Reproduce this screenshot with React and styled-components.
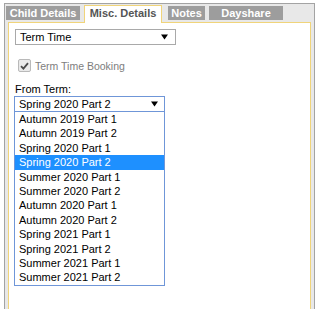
import React from "react";
import styled, { createGlobalStyle } from "styled-components";

const Global = createGlobalStyle`
  html, body { margin: 0; padding: 0; background: #fff; overflow: hidden; }
  body { font-family: "Liberation Sans", Arial, sans-serif; }
  * { box-sizing: border-box; }
`;

const Frame = styled.div`
  display: flex;
  flex-direction: column;
  margin: 3px 0 0 4px;
  width: 311px;
  height: 306px;
  border: 1px solid #a3a3a3;
  border-bottom: none;
  background: #e8e8e8;
  padding: 0 0 0 1px;
`;

const TabBar = styled.div`
  display: flex;
  align-items: flex-start;
  height: 18px;
  flex: none;
`;

const Tab = styled.div`
  position: relative;
  z-index: 1;
  width: ${(p) => p.$w}px;
  margin-right: ${(p) => p.$mr ?? 4}px;
  margin-top: ${(p) => (p.$active ? 1 : 2)}px;
  height: ${(p) => (p.$active ? 18 : 14)}px;
  background: ${(p) => (p.$active ? "#fff" : "#9d9d9d")};
  border: ${(p) => (p.$active ? "1px solid #f0d47a" : "none")};
  border-bottom: none;
  color: ${(p) => (p.$active ? "#555" : "#fff")};
  font-weight: bold;
  font-size: 11px;
  line-height: 14px;
  text-align: center;
  white-space: nowrap;
`;

const Panel = styled.div`
  flex: 1;
  margin-left: 2px;
  width: 303px;
  background: #fff;
  border: 1px solid #f0d47a;
  border-bottom: none;
  padding: 6px 0 0 5px;
`;

const Select = styled.div`
  position: relative;
  display: flex;
  align-items: center;
  justify-content: space-between;
  width: ${(p) => p.$w}px;
  height: 16px;
  margin-left: ${(p) => p.$ml ?? 0}px;
  border: 1px solid ${(p) => (p.$focus ? "#6f96d8" : "#a9a9a9")};
  background: #fff;
  padding: 0 ${(p) => p.$pr ?? 7}px 0 4px;
  font-size: 11px;
  color: #000;
  line-height: 14px;
`;

const Arrow = () => (
  <svg width="7" height="6" viewBox="0 0 7 6">
    <polygon points="0,0.5 7,0.5 3.5,5.5" fill="#000" />
  </svg>
);

const CheckRow = styled.label`
  display: flex;
  align-items: flex-end;
  gap: 4px;
  margin: 14px 0 0 4px;
  height: 13px;
`;

const Box = styled.span`
  width: 13px;
  height: 13px;
  border: 1px solid #b9b9b9;
  border-radius: 2px;
  background: #e9e9e9;
  display: flex;
  align-items: center;
  justify-content: center;
`;

const CheckLabel = styled.span`
  font-size: 10.5px;
  color: #7d7d7d;
  line-height: 12px;
`;

const FieldLabel = styled.div`
  margin: 11px 0 0 1px;
  font-size: 11px;
  line-height: 13px;
  height: 13px;
  color: #000;
`;

const Dropdown = styled.div`
  position: relative;
`;

const List = styled.ul`
  position: absolute;
  left: 0;
  top: 16px;
  width: 151px;
  margin: 0;
  padding: 0;
  list-style: none;
  border: 1px solid #6f96d8;
  border-top: none;
  background: #fff;
`;

const Item = styled.li`
  height: 14.4px;
  line-height: 14.4px;
  padding-left: 4px;
  font-size: 11px;
  white-space: nowrap;
  background: ${(p) => (p.$sel ? "#1e90ff" : "transparent")};
  color: ${(p) => (p.$sel ? "#fff" : "#000")};
`;

const terms = [
  "Autumn 2019 Part 1",
  "Autumn 2019 Part 2",
  "Spring 2020 Part 1",
  "Spring 2020 Part 2",
  "Summer 2020 Part 1",
  "Summer 2020 Part 2",
  "Autumn 2020 Part 1",
  "Autumn 2020 Part 2",
  "Spring 2021 Part 1",
  "Spring 2021 Part 2",
  "Summer 2021 Part 1",
  "Summer 2021 Part 2",
];

export default function App() {
  return (
    <>
      <Global />
      <Frame>
        <TabBar>
          <Tab $w={74}>Child Details</Tab>
          <Tab $w={78} $active $mr={6}>Misc. Details</Tab>
          <Tab $w={37} $mr={4}>Notes</Tab>
          <Tab $w={74}>Dayshare</Tab>
        </TabBar>
        <Panel>
          <Select $w={161} $ml={1}>
            <span>Term Time</span>
            <Arrow />
          </Select>
          <CheckRow>
            <Box>
              <svg width="9" height="8" viewBox="0 0 9 8">
                <path d="M1 4.2 L3.4 6.6 L8 1.2" stroke="#4a4a4a" strokeWidth="1.8" fill="none" />
              </svg>
            </Box>
            <CheckLabel>Term Time Booking</CheckLabel>
          </CheckRow>
          <FieldLabel>From Term:</FieldLabel>
          <Dropdown>
            <Select $w={151} $focus $pr={6}>
              <span>Spring 2020 Part 2</span>
              <Arrow />
            </Select>
            <List>
              {terms.map((t, i) => (
                <Item key={t} $sel={i === 3}>{t}</Item>
              ))}
            </List>
          </Dropdown>
        </Panel>
      </Frame>
    </>
  );
}
